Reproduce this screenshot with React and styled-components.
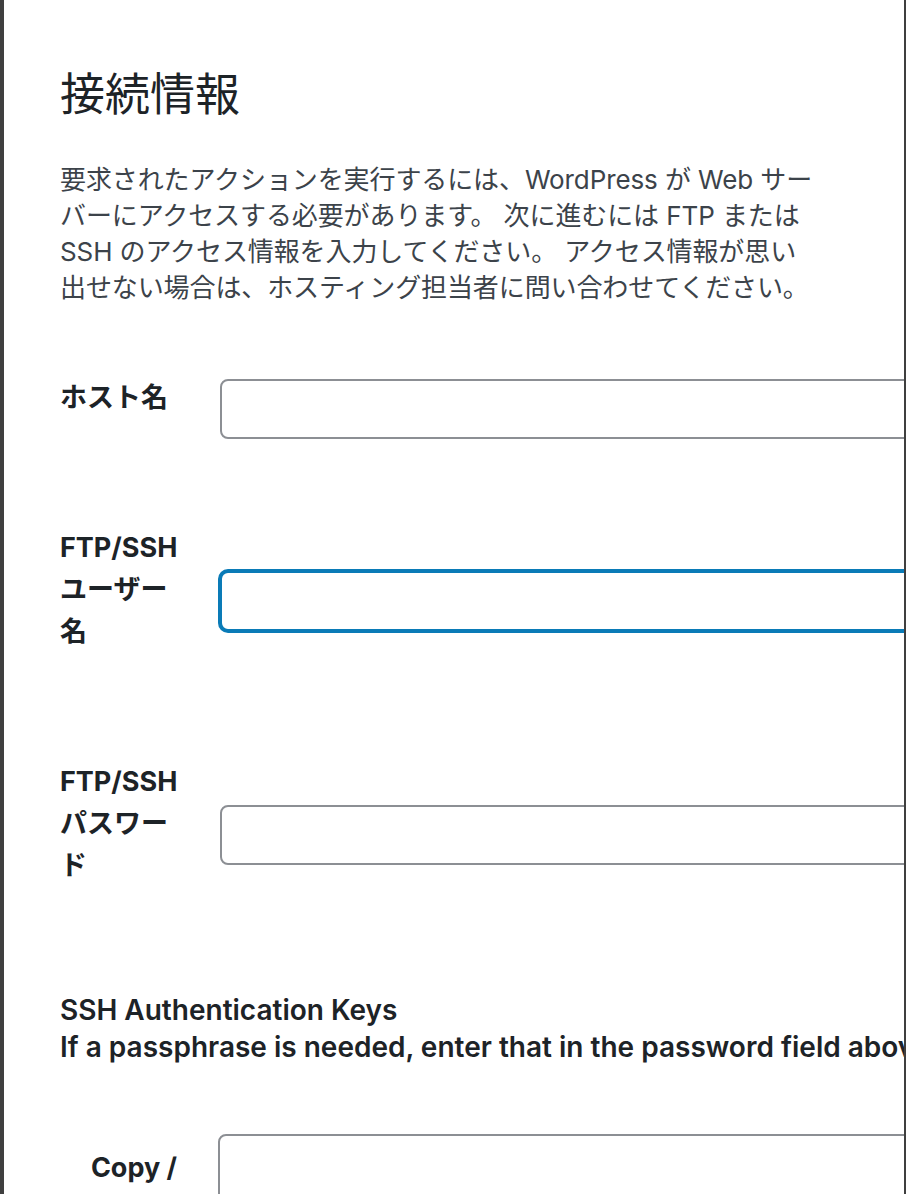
import React from "react";
import styled, { createGlobalStyle } from "styled-components";

const Global = createGlobalStyle`
  html, body {
    margin: 0;
    padding: 0;
    background: #3f3f3f;
    height: 1194px;
    overflow: hidden;
  }
  body {
    font-family: "Inter", "Noto Sans CJK JP", sans-serif;
  }
`;

const Backdrop = styled.div`
  display: flex;
  height: 1194px;
  padding-left: 4px;
  padding-right: 2px;
  box-sizing: border-box;
  background: #3f3f3f;
`;

const Modal = styled.div`
  flex: 1;
  background: #ffffff;
  overflow: hidden;
  padding-left: 56px;
  box-sizing: border-box;
`;

const Title = styled.h2`
  margin: 0;
  padding-top: 68px;
  font-size: 45px;
  line-height: 54px;
  font-weight: 400;
  color: #1d2327;
  font-family: "Inter", "Noto Sans CJK JP", sans-serif;
`;

const Description = styled.p`
  margin: 40px 0 0;
  font-size: 26px;
  line-height: 36px;
  color: #3c434a;
  white-space: nowrap;
  letter-spacing: -0.1px;
`;

const Form = styled.div`
  margin-top: 71px;
  display: flex;
  flex-direction: column;
  gap: 86px;
`;

const Row = styled.div`
  display: flex;
  align-items: ${(p) => (p.$top ? "flex-start" : "center")};
`;

const Label = styled.label`
  width: ${(p) => (p.$center ? "148px" : "134px")};
  flex-shrink: 0;
  margin-right: ${(p) => (p.$center ? "10px" : "26px")};
  margin-bottom: ${(p) => (p.$center ? "0" : "22px")};
  padding-top: ${(p) => (p.$center ? "13px" : "0")};
  text-align: ${(p) => (p.$center ? "center" : "left")};
  font-size: 27px;
  line-height: 42px;
  font-weight: 700;
  color: #1d2327;
`;

const Input = styled.div`
  width: 760px;
  height: ${(p) => (p.$tall ? "240px" : "60px")};
  flex-shrink: 0;
  box-sizing: border-box;
  border: 2px solid ${(p) => (p.$focused ? "#0a7bb7" : "#8c8f94")};
  border-radius: 8px;
  box-shadow: ${(p) => (p.$focused ? "0 0 0 2px #0a7bb7" : "none")};
  background: #fff;
`;

const Keys = styled.div`
  margin-top: 83px;
  font-size: 28px;
  line-height: 37px;
  font-weight: 600;
  color: #1d2327;
  white-space: nowrap;
`;

const KeyRow = styled.div`
  margin-top: 68px;
`;

export default function App() {
  return (
    <>
      <Global />
      <Backdrop>
        <Modal>
          <Title>接続情報</Title>
          <Description>
            要求されたアクションを実行するには、WordPress が Web サー
            <br />
            バーにアクセスする必要があります。 次に進むには FTP または
            <br />
            SSH のアクセス情報を入力してください。 アクセス情報が思い
            <br />
            出せない場合は、ホスティング担当者に問い合わせてください。
          </Description>
          <Form>
            <Row>
              <Label>ホスト名</Label>
              <Input />
            </Row>
            <Row>
              <Label>
                FTP/SSH
                <br />
                ユーザー
                <br />名
              </Label>
              <Input $focused />
            </Row>
            <Row>
              <Label>
                FTP/SSH
                <br />
                パスワー
                <br />ド
              </Label>
              <Input />
            </Row>
          </Form>
          <Keys>
            SSH Authentication Keys
            <br />
            If a passphrase is needed, enter that in the password field above.
          </Keys>
          <KeyRow>
            <Row $top>
              <Label $center>Copy /</Label>
              <Input $tall />
            </Row>
          </KeyRow>
        </Modal>
      </Backdrop>
    </>
  );
}
